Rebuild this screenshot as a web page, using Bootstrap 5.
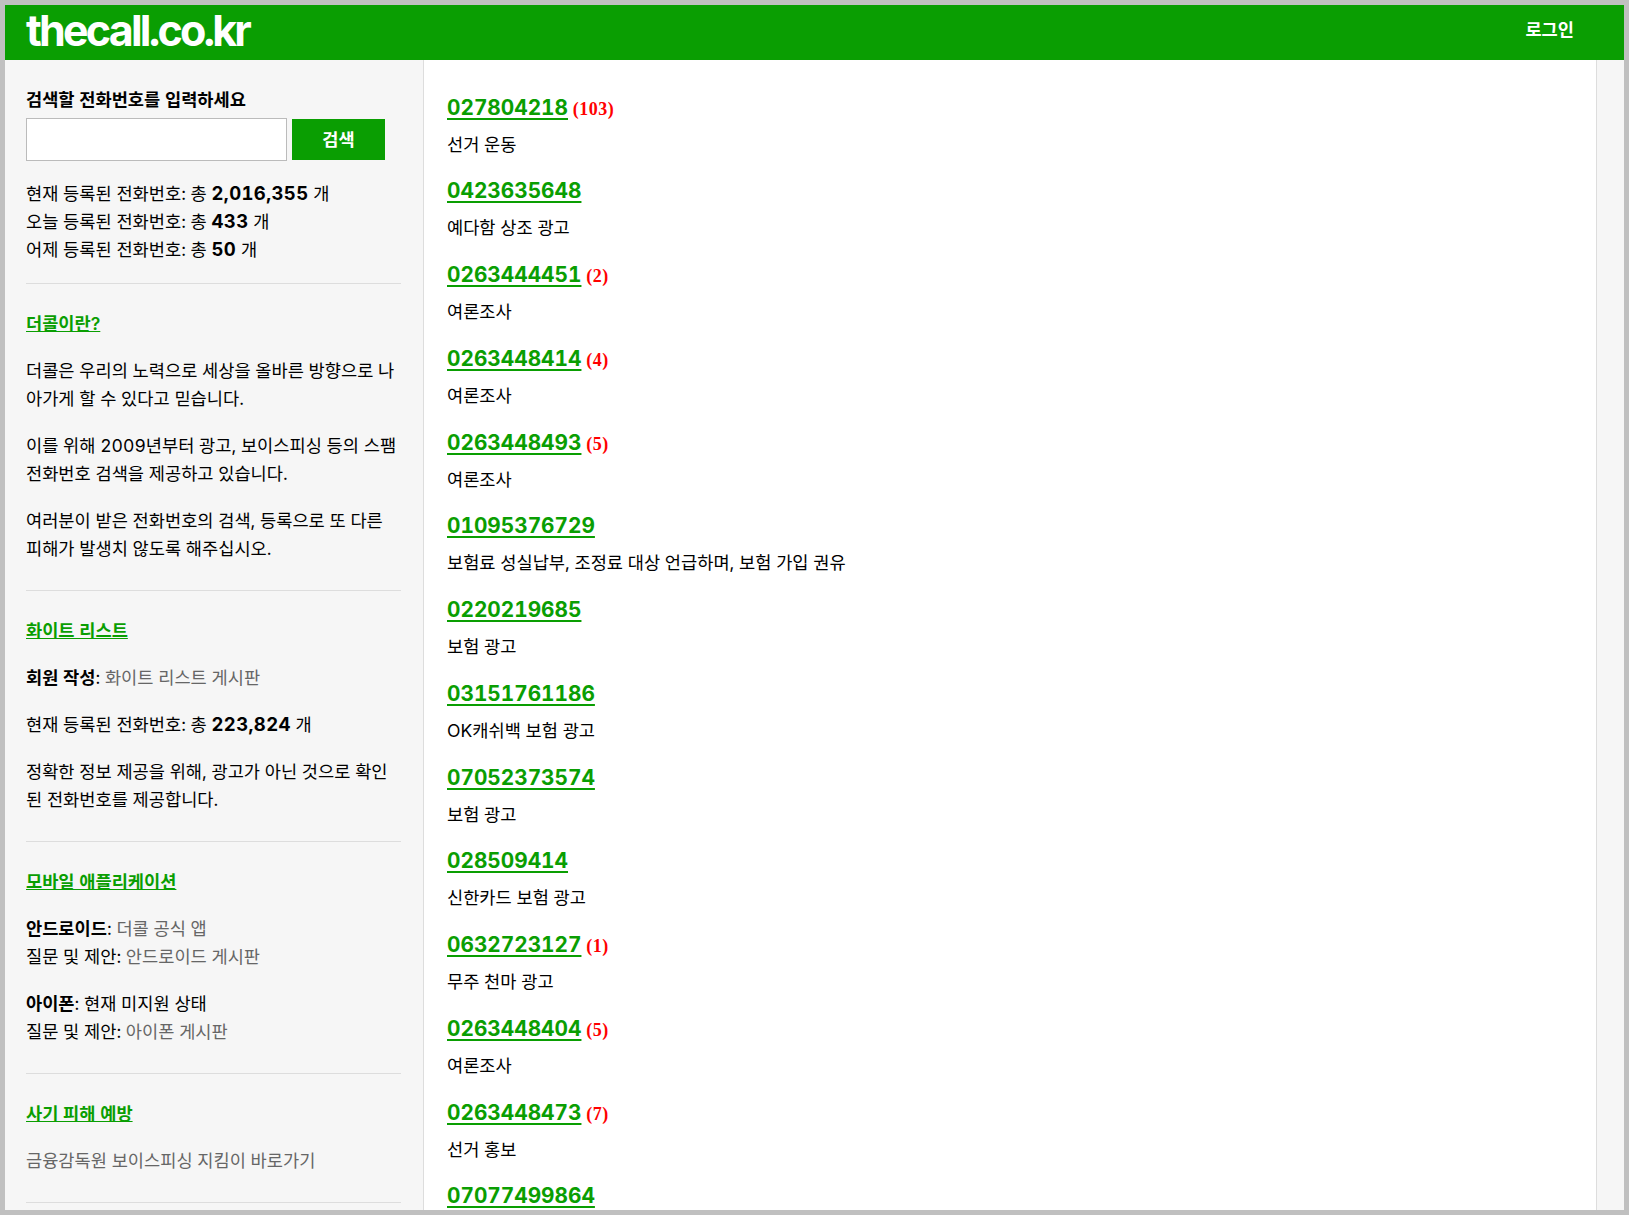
<!DOCTYPE html>
<html lang="ko">
<head>
<meta charset="utf-8">
<title>thecall.co.kr</title>
<link href="https://cdn.jsdelivr.net/npm/bootstrap@5.3.0/dist/css/bootstrap.min.css" rel="stylesheet">
<style>
html,body{height:100%;overflow:hidden}
body{font-family:Inter,"Noto Sans CJK KR",sans-serif;font-size:17.6px;line-height:28px;color:#000;background:#f6f6f6;font-variant-numeric:tabular-nums}
.frame{height:1215px;border:5px solid #c0c0c0;overflow:hidden;display:flex;flex-direction:column}
.topbar{height:55px;flex:none;background:#0a9e02;padding:0 50px 0 21px}
.logo{font-size:43px;font-weight:700;color:#fff;letter-spacing:-2.8px;line-height:50px;text-decoration:none;margin-top:-5px}
.login{color:#fff;font-weight:600;font-size:17.6px;text-decoration:none;margin-top:-6px}
.shell{flex:1;min-height:0}
.side{width:419px;flex:none;border-right:1px solid #ddd;padding:26px 22px 0 21px}
.main{width:1173px;flex:none;background:#fff;border-right:1px solid #ddd;padding:29.5px 23px 0}
.side p{margin:0 0 19px}
.qlabel{font-weight:600;margin-bottom:4px}
.qinput{width:261px;height:43px;border:1px solid #bbb;border-radius:0;background:#fff}
.qbtn{width:93px;height:41px;margin:1px 0 0 5px;background:#0a9e02;border:0;border-radius:0;color:#fff;font-weight:700;font-size:17.6px;padding:0}
.rule{margin:27px 0 26px;border:0;border-top:1px solid #ddd;opacity:1}
.stat+.rule{margin-top:19px}
.heading{display:block;margin-bottom:19px;font-weight:600;color:#0a9e02;text-decoration:underline}
.grey{color:#666;text-decoration:none}
.stat{margin-top:19px}
.figure{font-size:18.5px;line-height:1;letter-spacing:.02em;font-weight:700}
.entry{height:83.75px}
.num{font-size:20.8px;font-weight:700;color:#0a9e02;line-height:36px;text-decoration:underline;text-decoration-thickness:2px;text-underline-offset:3px}
.cnt{font-family:"Liberation Serif",serif;font-weight:700;font-size:18px;letter-spacing:.5px;color:#f00}
.desc{margin-top:5px}
</style>
</head>
<body>
<div class="frame">
  <header class="topbar d-flex justify-content-between align-items-center">
    <a class="logo" href="#">thecall.co.kr</a>
    <a class="login" href="#">로그인</a>
  </header>
  <div class="shell d-flex">
    <aside class="side">
      <div class="qlabel">검색할 전화번호를 입력하세요</div>
      <form class="d-flex align-items-start">
        <input class="qinput" type="text" aria-label="전화번호">
        <button class="qbtn" type="button">검색</button>
      </form>
      <div class="stat">현재 등록된 전화번호: 총 <b class="figure">2,016,355</b> 개<br>오늘 등록된 전화번호: 총 <b class="figure">433</b> 개<br>어제 등록된 전화번호: 총 <b class="figure">50</b> 개</div>
      <hr class="rule">
      <a class="heading" href="#">더콜이란?</a>
      <p>더콜은 우리의 노력으로 세상을 올바른 방향으로 나아가게 할 수 있다고 믿습니다.</p>
      <p>이를 위해 2009년부터 광고, 보이스피싱 등의 스팸 전화번호 검색을 제공하고 있습니다.</p>
      <p>여러분이 받은 전화번호의 검색, 등록으로 또 다른 피해가 발생치 않도록 해주십시오.</p>
      <hr class="rule">
      <a class="heading" href="#">화이트 리스트</a>
      <p><b>회원 작성</b>: <a class="grey" href="#">화이트 리스트 게시판</a></p>
      <p>현재 등록된 전화번호: 총 <b class="figure">223,824</b> 개</p>
      <p>정확한 정보 제공을 위해, 광고가 아닌 것으로 확인된 전화번호를 제공합니다.</p>
      <hr class="rule">
      <a class="heading" href="#">모바일 애플리케이션</a>
      <p><b>안드로이드</b>: <a class="grey" href="#">더콜 공식 앱</a><br>질문 및 제안: <a class="grey" href="#">안드로이드 게시판</a></p>
      <p><b>아이폰</b>: 현재 미지원 상태<br>질문 및 제안: <a class="grey" href="#">아이폰 게시판</a></p>
      <hr class="rule">
      <a class="heading" href="#">사기 피해 예방</a>
      <p><a class="grey" href="#">금융감독원 보이스피싱 지킴이 바로가기</a></p>
      <hr class="rule">
    </aside>
    <main class="main">
      <div class="entry"><a class="num" href="#">027804218</a> <span class="cnt">(103)</span><div class="desc">선거 운동</div></div>
      <div class="entry"><a class="num" href="#">0423635648</a><div class="desc">예다함 상조 광고</div></div>
      <div class="entry"><a class="num" href="#">0263444451</a> <span class="cnt">(2)</span><div class="desc">여론조사</div></div>
      <div class="entry"><a class="num" href="#">0263448414</a> <span class="cnt">(4)</span><div class="desc">여론조사</div></div>
      <div class="entry"><a class="num" href="#">0263448493</a> <span class="cnt">(5)</span><div class="desc">여론조사</div></div>
      <div class="entry"><a class="num" href="#">01095376729</a><div class="desc">보험료 성실납부, 조정료 대상 언급하며, 보험 가입 권유</div></div>
      <div class="entry"><a class="num" href="#">0220219685</a><div class="desc">보험 광고</div></div>
      <div class="entry"><a class="num" href="#">03151761186</a><div class="desc">OK캐쉬백 보험 광고</div></div>
      <div class="entry"><a class="num" href="#">07052373574</a><div class="desc">보험 광고</div></div>
      <div class="entry"><a class="num" href="#">028509414</a><div class="desc">신한카드 보험 광고</div></div>
      <div class="entry"><a class="num" href="#">0632723127</a> <span class="cnt">(1)</span><div class="desc">무주 천마 광고</div></div>
      <div class="entry"><a class="num" href="#">0263448404</a> <span class="cnt">(5)</span><div class="desc">여론조사</div></div>
      <div class="entry"><a class="num" href="#">0263448473</a> <span class="cnt">(7)</span><div class="desc">선거 홍보</div></div>
      <div class="entry"><a class="num" href="#">07077499864</a></div>
    </main>
  </div>
</div>
</body>
</html>
